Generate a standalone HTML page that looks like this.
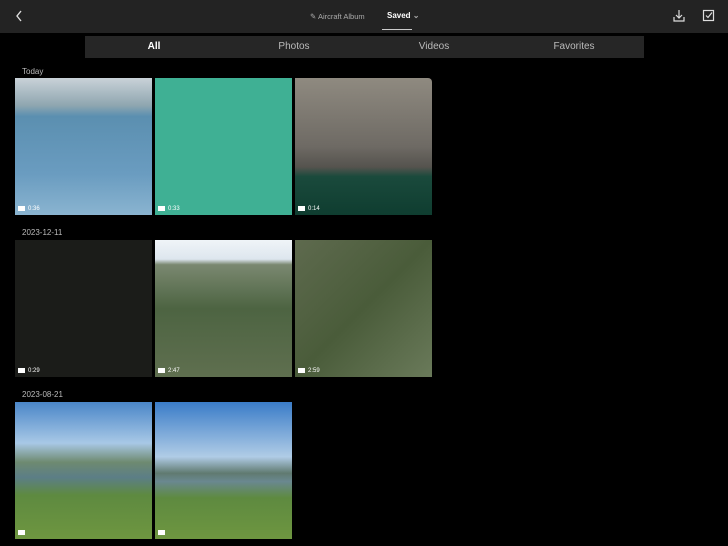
<!DOCTYPE html><html><head><style>
body{margin:0;width:728px;height:546px;background:#000;overflow:hidden;font-family:"Liberation Sans",sans-serif;position:relative}
.top{position:absolute;left:0;top:0;width:728px;height:33px;background:#232323}
.t{position:absolute;color:#fff;font-size:8px}
.tabs{position:absolute;left:85px;top:36px;width:559px;height:22px;background:#262626}
.tab{position:absolute;top:5px;font-size:10px;color:#bbb;width:100px;text-align:center}
.lab{position:absolute;left:22px;font-size:8px;color:#bbb}
.tile{position:absolute;width:137px;height:137px}
.d{position:absolute;left:3px;bottom:3px;font-size:6px;color:#fff}
.d:before{content:"";display:inline-block;width:7px;height:5px;background:#fff;margin-right:3px;vertical-align:-1px}
</style></head><body>
<div class="top"></div>
<svg style="position:absolute;left:14px;top:9px" width="10" height="14"><path d="M7 2 L3 7 L7 12" stroke="#ddd" stroke-width="1.4" fill="none"/></svg>
<div class="t" style="left:310px;top:12px;color:#aaa;font-size:7.5px">✎ Aircraft Album</div>
<div class="t" style="left:387px;top:11px;font-weight:bold">Saved <span style="color:#aaa">⌄</span></div>
<div style="position:absolute;left:382px;top:29px;width:30px;height:1px;background:#ccc"></div>
<svg style="position:absolute;left:672px;top:9px" width="14" height="14"><path d="M2 8v4h10V8M7 1v8M4 6l3 3 3-3" stroke="#ddd" stroke-width="1.2" fill="none"/></svg>
<svg style="position:absolute;left:702px;top:9px" width="14" height="14"><rect x="1.5" y="1.5" width="10" height="10" stroke="#ddd" fill="none" stroke-width="1.2"/><path d="M4 6.5l2 2 4-5" stroke="#ddd" fill="none" stroke-width="1.2"/></svg>
<div class="tabs">
<div class="tab" style="left:19px;color:#fff;font-weight:bold">All</div>
<div class="tab" style="left:159px">Photos</div>
<div class="tab" style="left:299px">Videos</div>
<div class="tab" style="left:439px">Favorites</div>
</div>
<div class="lab" style="top:67px">Today</div>
<div class="lab" style="top:228px">2023-12-11</div>
<div class="lab" style="top:390px">2023-08-21</div>
<div class="tile" style="left:15px;top:78px;background:linear-gradient(#c9d2d8 0,#8fa6b0 20%,#5b8fb0 28%,#6a9cc0 70%,#8ab4d0)"><span class="d">0:36</span></div>
<div class="tile" style="left:155px;top:78px;background:#3fb094"><span class="d">0:33</span></div>
<div class="tile" style="left:295px;top:78px;border-top-right-radius:4px;background:linear-gradient(#8f8a80 0,#6e6a64 50%,#55534e 65%,#1a4a3c 72%,#0f3d30)"><span class="d">0:14</span></div>
<div class="tile" style="left:15px;top:240px;background:#1b1c19"><span class="d">0:29</span></div>
<div class="tile" style="left:155px;top:240px;background:linear-gradient(#f0f4f8 0,#dde6ee 14%,#7a8870 18%,#4d6442 50%,#5f6f4f)"><span class="d">2:47</span></div>
<div class="tile" style="left:295px;top:240px;background:linear-gradient(135deg,#5e6a4e,#4a5c3a 50%,#6a7a5a)"><span class="d">2:59</span></div>
<div class="tile" style="left:15px;top:402px;background:linear-gradient(#4a86c8 0,#a8c8e6 30%,#6e8a70 44%,#5c7e86 55%,#5e8a40 68%,#6e9640)"><span class="d"></span></div>
<div class="tile" style="left:155px;top:402px;background:linear-gradient(#3a7cc8 0,#b0cce6 40%,#607a70 52%,#6a8890 58%,#5e8a40 70%,#6e9640)"><span class="d"></span></div>
</body></html>
